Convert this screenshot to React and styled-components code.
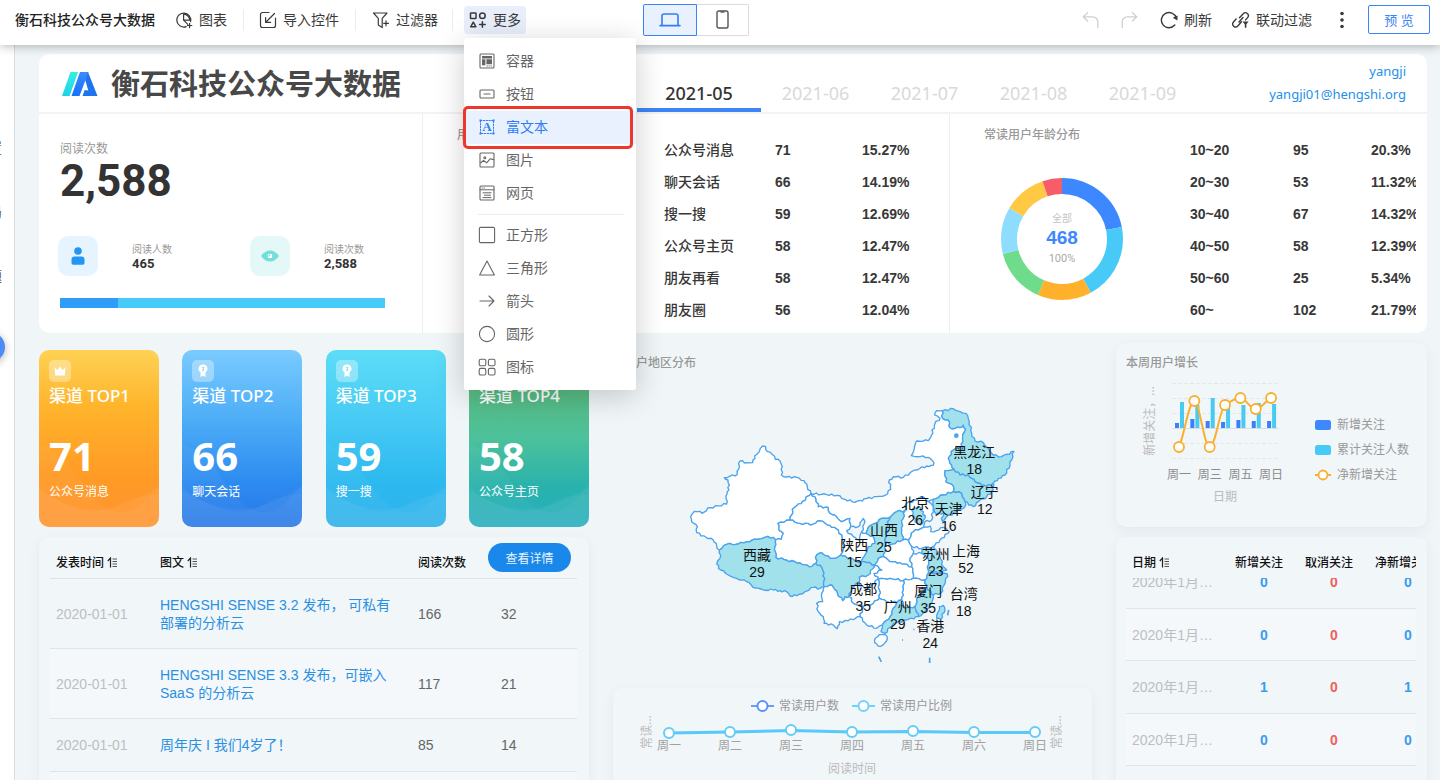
import React, { useLayoutEffect, useRef } from "react";
import styled, { createGlobalStyle } from "styled-components";

const UI = `"Noto Sans", "Noto Sans CJK SC", sans-serif`;
const DATA = `"Liberation Sans", "Noto Sans CJK SC", sans-serif`;
const NUM = `Roboto, "Noto Sans CJK SC", sans-serif`;

const Global = createGlobalStyle`
  *, *::before, *::after { box-sizing: border-box; }
  body { margin: 0; background: #f0f5f8; font-family: ${UI}; color: #333; font-size: 14px; }
  button { font-family: inherit; cursor: pointer; }
  svg { display: block; flex: none; }
`;

const Page = styled.div`
  height: 100vh;
  display: flex;
  flex-direction: column;
  overflow: hidden;
`;

/* ---------- toolbar ---------- */

const Toolbar = styled.header`
  position: relative;
  z-index: 5;
  flex: none;
  height: 45px;
  padding: 0 10px 6px 15px;
  display: flex;
  align-items: center;
  background: #fff;
  box-shadow: 0 1px 10px rgba(0, 0, 0, 0.3);
  white-space: nowrap;
`;
const DocTitle = styled.h1`
  margin: 0;
  width: 145px;
  font-size: 14px;
  line-height: 20px;
  font-weight: 500;
  color: #222;
`;
const Tool = styled.button`
  display: flex;
  align-items: center;
  gap: ${(p) => p.$gap || 6}px;
  height: 28px;
  padding: 0;
  margin-left: ${(p) => p.$left || 0}px;
  border: 0;
  border-radius: 4px;
  background: none;
  color: ${(p) => (p.$muted ? "#cfcfcf" : "#3a3a3a")};
  font-size: 14px;
  line-height: 20px;
`;
const ToolRule = styled.span`
  width: 1px;
  height: 22px;
  margin-left: ${(p) => p.$left}px;
  background: #ececec;
`;
const MoreWrap = styled.div`
  position: relative;
  margin-left: 11px;
`;
const MoreButton = styled(Tool)`
  width: 62px;
  padding-left: 5px;
  background: #e8effb;
`;
const Devices = styled.div`
  display: flex;
  height: 32px;
  margin-left: 117px;
`;
const Device = styled.button`
  display: flex;
  align-items: center;
  justify-content: center;
  width: ${(p) => (p.$on ? 54 : 52)}px;
  padding: 0;
  border: 1px solid ${(p) => (p.$on ? "#3b84f5" : "#dcdcdc")};
  border-left-width: ${(p) => (p.$on ? 1 : 0)}px;
  border-radius: ${(p) => (p.$on ? "2px 0 0 2px" : "0 2px 2px 0")};
  background: ${(p) => (p.$on ? "#e9f1fe" : "#fff")};
  color: ${(p) => (p.$on ? "#2f7df6" : "#555")};
`;
const RightTools = styled.div`
  display: flex;
  align-items: center;
  margin-left: auto;
`;
const Preview = styled.button`
  width: 62px;
  height: 29px;
  margin-left: 24px;
  padding: 0;
  border: 1px solid #3b84f5;
  border-radius: 2px;
  background: #fff;
  color: #3b84f5;
  font-size: 13px;
`;

/* ---------- drop-down menu ---------- */

const Menu = styled.div`
  position: absolute;
  z-index: 10;
  top: 32px;
  left: 0;
  width: 172px;
  padding: 7px 0 6px;
  background: #fff;
  border-radius: 2px;
  box-shadow: 0 6px 30px rgba(0, 0, 0, 0.2);
`;
const MenuItem = styled.button`
  display: flex;
  align-items: center;
  gap: 10px;
  width: 100%;
  height: 33px;
  padding: 0 14px;
  border: 0;
  background: ${(p) => (p.$on ? "#e9f1fe" : "none")};
  color: ${(p) => (p.$on ? "#2f7df6" : "#666")};
  font-size: 14px;
  line-height: 20px;
`;
const MenuRule = styled.hr`
  height: 1px;
  margin: 4px 12px 4px 14px;
  border: 0;
  background: #ededed;
`;
const Callout = styled.div`
  position: absolute;
  top: 68px;
  left: -1px;
  width: 170px;
  height: 43px;
  border: 3px solid #f0352b;
  border-radius: 5px;
  pointer-events: none;
`;

/* ---------- frame ---------- */

const Work = styled.div`
  flex: 1;
  min-height: 0;
  display: flex;
`;
const Side = styled.aside`
  position: relative;
  flex: none;
  width: 15px;
  padding: 93px 12px 0 0;
  display: flex;
  flex-direction: column;
  align-items: flex-end;
  gap: 44px;
  overflow: hidden;
  background: #fff;
  border-right: 1px solid #d8dde0;
  color: #555;
  font-size: 14px;
  line-height: 20px;
  white-space: nowrap;
`;
const SideKnob = styled.button`
  position: absolute;
  top: 287px;
  left: -25px;
  width: 30px;
  height: 30px;
  border: 0;
  border-radius: 50%;
  background: #4b8bfb;
  box-shadow: 0 2px 8px rgba(0, 0, 0, 0.3);
`;
const Board = styled.main`
  flex: 1;
  min-width: 0;
  padding: 9px 13px 0 24px;
  background: #f0f5f8;
`;

/* ---------- summary panel ---------- */

const Summary = styled.section`
  background: #fff;
  border-radius: 10px;
  overflow: hidden;
`;
const SummaryHead = styled.div`
  display: flex;
  height: 60px;
  padding: 0 21px 0 23px;
  border-bottom: 2px solid #f3f3f3;
`;
const Brand = styled.h2`
  display: flex;
  align-items: center;
  gap: 13px;
  margin: 0;
  padding-top: 2px;
  font-size: 29px;
  line-height: 40px;
  font-weight: 700;
  color: #484848;
  white-space: nowrap;
`;
const Months = styled.nav`
  display: flex;
  margin-left: auto;
`;
const Month = styled.button`
  width: ${(p) => (p.$on ? 124 : 109)}px;
  padding: 23px 0 0;
  border: 0;
  border-bottom: 4px solid ${(p) => (p.$on ? "#3d85f5" : "transparent")};
  background: none;
  color: ${(p) => (p.$on ? "#333" : "#d9d9d9")};
  font-size: 18px;
  line-height: 24px;
  font-weight: ${(p) => (p.$on ? 500 : 400)};
`;
const User = styled.div`
  display: flex;
  flex-direction: column;
  align-items: flex-end;
  width: 209px;
  padding-top: 6px;
  color: #2490e8;
  font-size: 13px;
  line-height: 23px;
`;
const Panes = styled.div`
  display: grid;
  grid-template-columns: 383fr 527fr 478fr;
`;
const Pane = styled.div`
  display: flex;
  min-width: 0;
  height: 219px;
  padding: 0 ${(p) => p.$right || 0}px 0 34px;
  border-left: 1px solid #eee;
`;
const ReadPane = styled.div`
  padding: 26px 0 0 21px;
`;
const Caption = styled.div`
  font-size: ${(p) => (p.$small ? 10 : 12)}px;
  line-height: ${(p) => (p.$small ? 14 : 18)}px;
  color: #999;
`;
const BigNumber = styled.div`
  font: 700 44px/46px ${NUM};
  color: #333;
`;
const Stats = styled.div`
  display: grid;
  grid-template-columns: 192px 1fr;
  margin: 32px 0 22px -2px;
`;
const Stat = styled.div`
  display: flex;
  gap: 34px;
`;
const StatIcon = styled.div`
  display: grid;
  place-items: center;
  width: 40px;
  height: 40px;
  border-radius: 10px;
  background: ${(p) => p.$bg};
`;
const StatText = styled.div`
  padding-top: 6px;
`;
const StatValue = styled.div`
  font: 700 13px/16px ${NUM};
  color: #333;
`;
const Progress = styled.div`
  width: 325px;
  height: 10px;
  background: #48caf9;
`;
const ProgressFill = styled.div`
  height: 100%;
  background: #2f9df8;
`;
const PaneTitle = styled.h3`
  margin: 0;
  font-size: 12px;
  line-height: 20px;
  font-weight: 500;
  color: #999;
`;
const PaneLeft = styled.div`
  flex: none;
  width: ${(p) => p.$w}px;
  padding-top: 11px;
`;
const DonutBox = styled.div`
  margin: 32px 0 0 16px;
`;
const Clip = styled.div`
  flex: 1;
  min-width: 0;
  padding-top: 20px;
  overflow: hidden;
`;
const Ranking = styled.table`
  width: 270px;
  table-layout: fixed;
  border-collapse: collapse;
  font: 700 14px/20px ${DATA};
  color: #383838;
  td, th { height: 32px; padding: 0; font-weight: 700; text-align: left; white-space: nowrap; }
  th { font-weight: ${(p) => (p.$boldNames ? 700 : 500)}; }
`;

/* ---------- lower grid ---------- */

const Lower = styled.div`
  display: grid;
  grid-template-columns: 550fr 479fr 311fr;
  gap: 24px;
  margin-top: 10px;
`;
const Column = styled.div`
  min-width: 0;
  display: flex;
  flex-direction: column;
  gap: 10px;
`;
const Panel = styled.section`
  position: relative;
  border-radius: 10px;
  background: #f1f6f9;
  box-shadow: 0 4px 12px rgba(60, 80, 100, 0.07);
`;
const Cards = styled.div`
  display: grid;
  grid-template-columns: repeat(4, 120px);
  justify-content: space-between;
  padding-top: 7px;
`;
const Card = styled.article`
  position: relative;
  height: 177px;
  padding: 10px 10px 0;
  overflow: hidden;
  border-radius: 10px;
  background: linear-gradient(${(p) => p.$bg});
  color: #fff;
`;
const Waves = styled.svg`
  position: absolute;
  left: 0;
  bottom: 0;
  width: 100%;
  height: 82px;
`;
const Badge = styled.div`
  display: grid;
  place-items: center;
  width: 22px;
  height: 22px;
  border-radius: 5px;
  background: rgba(255, 255, 255, 0.35);
`;
const CardTitle = styled.h3`
  margin: 2px 0 0;
  font-size: 17px;
  line-height: 24px;
  font-weight: 500;
  white-space: nowrap;
`;
const CardNumber = styled.div`
  position: relative;
  margin-top: 23px;
  font: 700 40px/50px ${UI};
`;
const CardLabel = styled.div`
  position: relative;
  margin-top: 2px;
  font-size: 12px;
  line-height: 18px;
`;

/* ---------- tables ---------- */

const Articles = styled(Panel)`
  height: 260px;
  padding: 10px 12px 0 11px;
`;
const DetailButton = styled.button`
  position: absolute;
  top: 6px;
  right: 18px;
  width: 83px;
  height: 29px;
  padding: 0;
  border: 0;
  border-radius: 15px;
  background: #1a88ea;
  color: #e8f4ff;
  font-size: 12px;
`;
const Grid = styled.table`
  width: ${(p) => p.$w || "100%"};
  table-layout: fixed;
  border-collapse: separate;
  border-spacing: 0;
  font: 400 14px/18px ${DATA};
  color: #666;
  th {
    height: 32px;
    padding: 0 0 0 6px;
    text-align: left;
    font: 500 12px/18px ${UI};
    color: #111;
    white-space: nowrap;
  }
  td { padding: 0 0 0 6px; border-bottom: 1px solid #dfe4e7; }
  tr:nth-child(even) td { background: #f5f8fb; }
`;
const ArticleHead = styled.thead`
  th { border-bottom: 1px solid #dfe4e7; }
`;
const ArticleRow = styled.tr`
  height: ${(p) => (p.$tall ? 70 : 53)}px;
`;
const TitleCell = styled.td`
  && { padding-right: 12px; }
`;
const Dim = styled.td`
  color: #bcbfc1;
`;
const Link = styled.a`
  color: #2a90e2;
  text-decoration: none;
`;
const Sort = styled.span`
  display: inline-block;
  vertical-align: -1px;
  margin-left: 3px;
`;
const Growth = styled(Panel)`
  height: 184px;
  padding: 10px 10px 0;
`;
const GrowthBody = styled.div`
  display: flex;
  gap: 22px;
  margin-top: 3px;
`;
const Legend = styled.ul`
  margin: 36px 0 0;
  padding: 0;
  list-style: none;
  font-size: 12px;
  line-height: 25px;
  color: #999;
  white-space: nowrap;
  li { display: flex; align-items: center; gap: 6px; }
`;
const DailyPanel = styled(Panel)`
  height: 260px;
  padding: 10px 11px 0 10px;
`;
const DailyScroll = styled.div`
  height: 250px;
  overflow: hidden;
`;
const DailyHead = styled.thead`
  th { position: sticky; top: 0; z-index: 1; height: 31px; background: #f1f6f9; }
`;
const DailyRow = styled.tr`
  height: ${(p) => (p.$tall ? 52 : 53)}px;
`;
const Value = styled.td`
  && { padding: 0; }
  text-align: center;
  font-weight: 700;
  color: ${(p) => (p.$red ? "#f0605f" : "#3c9bea")};
`;
const MapArea = styled.section`
  height: 335px;
  padding-top: 10px;
`;
const MapTitle = styled(PaneTitle)`
  margin-bottom: 9px;
  padding-left: 11px;
`;
const Trend = styled(Panel)`
  height: 120px;
  padding-top: 7px;
`;
const Wide = styled.svg`
  width: 100%;
`;

/* ---------- icons ---------- */

const Icon = ({ size = 18, children, w = 1.3 }) => (
  <svg width={size} height={size} viewBox="0 0 18 18" fill="none" stroke="currentColor" strokeWidth={w} strokeLinecap="round" strokeLinejoin="round" aria-hidden="true">
    {children}
  </svg>
);
const ChartIcon = () => (
  <Icon w={1.2}>
    <path d="M11.2 15.6A7 7 0 1 1 15.6 10.600" />
    <path d="M8.6 3.2v6h6.2A6.2 6.2 0 0 0 8.600 3.200zM8.600 9.200l4.200 4.200M14.600 12.300v4.400M12.400 14.500h4.400" />
  </Icon>
);
const ImportIcon = () => (
  <Icon w={1.2}>
    <path d="M10 1.500H3.500a2 2 0 0 0-2 2v11a2 2 0 0 0 2 2h11a2 2 0 0 0 2-2V7M15.500 2.500L7 11M6.600 6.600v4.800h5" />
  </Icon>
);
const FilterIcon = () => (
  <Icon w={1.2}>
    <path d="M1.500 2h13.500l-4.800 5.400v9.200M1.500 2l4.800 5.400v6.600l3.900 2.600M14 9.800v5M11.700 12.300h4.800" />
  </Icon>
);
const MoreIcon = () => (
  <Icon w={1.5}>
    <rect x="1.5" y="2" width="5.5" height="5.5" rx="0.6" />
    <circle cx="13.4" cy="4.8" r="2.8" />
    <path d="M4.3 11.2l-2.6 4.6h5.2zM13.4 10.7v5.6M10.6 13.5h5.6" />
  </Icon>
);
const LaptopIcon = () => (
  <svg width="22" height="14" viewBox="0 0 22 14" fill="none" stroke="currentColor" strokeWidth="1.6" aria-hidden="true">
    <path d="M3 12V3a2 2 0 0 1 2-2h12a2 2 0 0 1 2 2v9M1 12.6h20" strokeLinecap="round" />
  </svg>
);
const PhoneIcon = () => (
  <svg width="13" height="19" viewBox="0 0 13 19" fill="none" stroke="currentColor" strokeWidth="1.4" aria-hidden="true">
    <rect x="1" y="1" width="11" height="17" rx="1.8" />
    <path d="M4.5 2h4" />
  </svg>
);
const UndoIcon = ({ flip }) => (
  <svg width="17" height="18" viewBox="0 0 17 18" fill="none" stroke="currentColor" strokeWidth="1.3" strokeLinecap="round" aria-hidden="true">
    <g transform={flip ? "translate(17 0) scale(-1 1)" : undefined}>
      <path d="M5.600 1.600L1.300 5.800 5.600 10M1.600 5.800h9.200a5 5 0 0 1 5 5v5.600" />
    </g>
  </svg>
);
const RefreshIcon = () => (
  <Icon w={1.4}>
    <path d="M14.800 14A7.600 7.600 0 1 1 16.300 7" />
    <path d="M12.800 6.800l4.600 2.600.2-5z" fill="currentColor" stroke="none" />
  </Icon>
);
const LinkIcon = () => (
  <Icon w={1.4}>
    <path d="M7.5 6.8l3.7-4a2.9 2.9 0 0 1 4.4 3.800l-2 2.300M9.500 10.700L5.800 15A2.900 2.900 0 0 1 1.500 11l2.600-3M7 11l4-4.500" />
    <path d="M10.6 10.400h6l-2.200 2.800v3.600h-1.600v-3.600z" fill="currentColor" stroke="none" />
  </Icon>
);
const DotsIcon = () => (
  <svg width="4" height="18" viewBox="0 0 4 18" fill="currentColor" aria-hidden="true">
    <circle cx="2" cy="2.5" r="1.8" /><circle cx="2" cy="9" r="1.8" /><circle cx="2" cy="15.5" r="1.8" />
  </svg>
);

const menuIcons = {
  box: (
    <>
      <rect x="2" y="2" width="14" height="14" rx="1" />
      <path d="M4 4h10v2.400H4zM4 7.200h3.400v6H4zM8.400 7.200H14v5H8.400z" fill="currentColor" stroke="none" />
      <path d="M9 14h.4M11 14h.4M13 14h.4" strokeWidth="1" />
    </>
  ),
  button: <><rect x="2" y="5" width="14" height="8" rx="1" /><path d="M6 9h6" /></>,
  text: (
    <>
      <rect x="2.5" y="2.5" width="13" height="13" strokeDasharray="1.4 1.4" strokeWidth="1" />
      <path d="M1.5 1.5h2v2h-2zM14.5 1.5h2v2h-2zM1.5 14.5h2v2h-2zM14.5 14.5h2v2h-2z" fill="currentColor" stroke="none" />
      <text x="9" y="13.400" textAnchor="middle" fontSize="13" fontWeight="700" fontFamily="Liberation Serif, serif" fill="currentColor" stroke="none">A</text>
    </>
  ),
  image: (
    <>
      <rect x="2" y="2" width="14" height="14" rx="1" />
      <circle cx="6.8" cy="6.8" r="1" />
      <path d="M2.5 12l3-2.6 3.2 2.4 3.4-4 3.6.8" />
    </>
  ),
  page: <><rect x="2" y="2" width="14" height="14" rx="1" /><path d="M2 5.800h14M4 4h.4M6 4h.4M5 8.800h8M6.500 11.200h6M5 13.600h8" strokeWidth="1" /></>,
  square: <rect x="1.4" y="1.4" width="15.2" height="15.2" rx="1.2" />,
  triangle: <path d="M9 2L1.6 16h14.8z" />,
  arrow: <path d="M2 9h14M11 4l5 5-5 5" />,
  circle: <circle cx="9" cy="9" r="7.6" />,
  grid: (
    <>
      <rect x="1.2" y="1.2" width="6.600" height="6.600" rx="1.600" /><rect x="10.400" y="1.2" width="6.600" height="6.600" rx="1.600" />
      <rect x="1.2" y="10.400" width="6.600" height="6.600" rx="1.600" /><rect x="10.400" y="10.400" width="6.600" height="6.600" rx="1.600" />
    </>
  ),
};
const SortIcon = () => (
  <Sort>
    <svg width="11" height="11" viewBox="0 0 11 11" fill="none" stroke="#222" aria-hidden="true">
      <path d="M3.5 10.5V1L.8 4" strokeWidth="1.2" />
      <path d="M5.5 2H10M5.5 4.5H10M5.5 7H10M5.5 9.5H10" stroke="#555" />
    </svg>
  </Sort>
);
const Logo = () => (
  <svg width="36" height="24" viewBox="0 0 36 24" aria-hidden="true">
    <defs>
      <linearGradient id="lg1" x1="0" y1="0" x2="0" y2="1"><stop offset="0" stopColor="#38eee0" /><stop offset="1" stopColor="#19d3e8" /></linearGradient>
      <linearGradient id="lg2" x1="0" y1="0" x2="0" y2="1"><stop offset="0" stopColor="#3b8bfb" /><stop offset="1" stopColor="#1572fb" /></linearGradient>
    </defs>
    <path d="M8.500 0H16L7.600 24H0z" fill="url(#lg1)" />
    <path d="M18 0h8.500l-9 24H9.500z" fill="url(#lg2)" />
    <path d="M26 0l9.500 24H20.500l2.200-6 3.600.6L23.200 8z" fill="#1d74ee" />
  </svg>
);

/* ---------- charts ---------- */

const slices = [
  [102, "#3d87ff"], [95, "#48caf9"], [67, "#ffb12b"], [68, "#6edc8b"],
  [58, "#8edcfe"], [53, "#ffc945"], [25, "#f75c6a"],
];
const Donut = () => {
  const c = 2 * Math.PI * 53;
  let sum = 0;
  return (
    <svg width="124" height="124" viewBox="0 0 124 124" role="img" aria-label="常读用户年龄分布">
      <g transform="rotate(-90 62 62)" fill="none" strokeWidth="16">
        {slices.map(([n, color]) => {
          const from = (sum / 468) * c;
          sum += n;
          return <circle key={color} cx="62" cy="62" r="53" stroke={color} strokeDasharray={`${(n / 468) * c} ${c}`} strokeDashoffset={-from} />;
        })}
      </g>
      <g textAnchor="middle">
        <text x="62" y="45" fontSize="10" fill="#c4c4c4">全部</text>
        <text x="62" y="67" fontSize="19" fontWeight="700" fill="#3d87ff" fontFamily="Liberation Sans, sans-serif">468</text>
        <text x="62" y="85" fontSize="11" fill="#aaa" fontFamily="Roboto, sans-serif">100%</text>
      </g>
    </svg>
  );
};

const blueTops = [47, 43, 45, 46, 44, 45, 45];
const cyanTops = [26, 29, 22, 32, 29, 27, 28];
const growthLine = [71, 25, 71, 29, 22, 33, 22];
const GrowthChart = () => (
  <svg width="167" height="136" viewBox="0 0 167 136" fontSize="12" role="img" aria-label="本周用户增长">
    {[7, 22, 37, 67, 82].map((y) => <path key={y} d={`M46 ${y + 0.5}h107`} stroke="#e3e7ea" strokeDasharray="4 2" />)}
    <path d="M46 52.500h107" stroke="#d9dee2" />
    {blueTops.map((y, i) => <rect key={i} x={49 + i * 15.35} y={y} width="4" height={52 - y} fill="#3d7ff5" />)}
    {cyanTops.map((y, i) => <rect key={i} x={54 + i * 15.35} y={y} width="4" height={52 - y} fill="#48caf2" />)}
    <path d="M53 71C58 60 63 25 68.300 25S78 71 83.700 71 94 32 99 29 109 22 114.300 22 124 33 129.700 33 140 24 145.300 22" fill="none" stroke="#f9b02f" strokeWidth="2" />
    {growthLine.map((y, i) => <circle key={i} cx={53 + i * 15.35} cy={y} r="5" fill="#fff" stroke="#f9b02f" strokeWidth="1.8" />)}
    <g textAnchor="middle" fill="#8c8c8c">
      {["周一", "周三", "周五", "周日"].map((d, i) => <text key={d} x={53 + i * 30.7} y="103">{d}</text>)}
      <text x="99" y="125" fill="#bbb">日期</text>
      <text transform="translate(28 45) rotate(-90)" fill="#bbb">新增关注，…</text>
    </g>
  </svg>
);

const trendY = [48, 47, 45, 47, 46, 47, 47];
const trendLine = [38, 37, 35.5, 37, 36.5, 37.5, 37.5];
const TrendChart = () => (
  <Wide viewBox="0 0 479 90" fontSize="12" role="img" aria-label="阅读时间">
    <path d="M138 11h23" stroke="#6b9cfa" strokeWidth="2" /><circle cx="149.500" cy="11" r="5" fill="#fff" stroke="#5b8ff9" strokeWidth="2" />
    <path d="M239 11h23" stroke="#6ed3f8" strokeWidth="2" /><circle cx="250.500" cy="11" r="5" fill="#fff" stroke="#6ed3f8" strokeWidth="2" />
    <text x="166" y="15" fill="#999">常读用户数</text>
    <text x="267" y="15" fill="#999">常读用户比例</text>
    <path d={`M${trendLine.map((y, i) => `${56 + i * 61} ${y}`).join("L")}`} fill="none" stroke="#5ac8f8" strokeWidth="3" />
    {trendY.map((y, i) => <circle key={i} cx={56 + i * 61} cy={y - 10} r="5" fill="#fff" stroke="#63cdf5" strokeWidth="2" />)}
    <g textAnchor="middle" fill="#a0a0a0">
      {["周一", "周二", "周三", "周四", "周五", "周六", "周日"].map((d, i) => <text key={d} x={56 + i * 61} y="55">{d}</text>)}
      <text x="239" y="78" fill="#bbb">阅读时间</text>
      <text transform="translate(38 37) rotate(-90)" fill="#bbb">常读…</text>
      <text transform="translate(448 37) rotate(-90)" fill="#bbb">常读…</text>
    </g>
  </Wide>
);

/* province outlines: [filled, "x y x y ..."] */
const provinces = [
  [0, "488 318 497 320 502 335 516 343 526 358 540 363 547 380 544 405 560 411 590 412 612 422 622 440 633 461 608 484 590 497 577 508 576 524 570 540 552 547 534 550 538 572 550 580 544 598 527 600 520 592 495 592 470 598 440 605 415 612 380 613 358 630 350 618 340 600 318 592 290 578 292 560 275 545 272 530 283 514 300 514 306 520 330 503 380 492 378 468 387 450 384 420 373 413 412 403 420 363 440 368 458 368 464 348 478 335"],
  [1, "358 630 380 613 415 612 440 605 470 598 495 592 520 592 527 600 525 620 528 652 560 660 600 668 628 680 648 670 665 682 672 700 672 740 660 745 640 742 615 755 590 767 570 768 560 755 540 752 520 750 490 750 466 744 440 725 410 715 385 705 362 690 350 672 360 655"],
  [0, "534 550 552 547 570 540 600 550 640 552 660 542 690 556 715 570 727 595 733 620 722 645 705 655 690 655 665 638 650 645 648 670 628 680 600 668 560 660 528 652 525 620 527 600 544 598 550 580 538 572"],
  [0, "633 461 648 478 655 500 685 502 690 520 710 530 725 545 750 535 752 560 740 572 760 590 778 600 785 575 798 580 820 590 825 610 805 620 795 645 785 665 770 665 750 655 735 648 722 645 733 620 727 595 715 570 690 556 660 542 640 552 600 550 570 540 576 524 577 508 590 497 608 484"],
  [0, "633 461 680 464 710 466 735 478 765 487 800 476 830 470 855 466 872 448 868 420 880 410 910 412 945 390 980 378 1000 376 1002 368 985 352 960 350 934 347 943 325 950 303 985 302 995 285 1005 250 1020 235 1004 225 1010 212 1028 212 1028 235 1045 240 1052 265 1080 263 1090 255 1097 268 1088 290 1086 320 1060 330 1045 355 1055 375 1062 388 1035 392 1038 425 1060 438 1060 455 1030 465 1000 478 985 485 965 470 950 480 920 490 915 512 890 515 870 532 845 535 825 550 805 562 798 580 785 575 795 545 790 535 780 548 775 560 752 560 750 535 725 545 710 530 690 520 685 502 655 500 648 478"],
  [1, "1028 212 1060 206 1080 215 1098 220 1108 245 1115 280 1125 303 1150 308 1165 325 1180 345 1205 350 1242 334 1230 375 1215 405 1195 415 1180 430 1160 440 1140 430 1125 425 1105 405 1080 405 1062 388 1055 375 1045 355 1060 330 1086 320 1088 290 1097 268 1090 255 1080 263 1052 265 1045 240 1028 235"],
  [1, "1035 392 1062 388 1080 405 1105 405 1125 425 1140 430 1160 440 1180 430 1180 450 1160 470 1135 485 1120 500 1095 485 1085 460 1060 455 1060 438 1038 425"],
  [1, "1000 478 1030 465 1060 455 1085 460 1095 485 1095 500 1070 515 1040 530 1028 545 1024 535 1032 518 1008 522 1000 500"],
  [0, "920 490 950 480 965 470 985 485 1000 500 995 540 975 545 970 562 940 575 925 600 908 600 905 570 905 550 915 512"],
  [1, "935 510 955 500 970 515 975 535 962 555 945 545"],
  [0, "925 600 940 575 970 562 990 558 992 575 1010 572 1030 562 1048 575 1020 600 1000 620 965 625 935 620"],
  [1, "870 532 890 515 915 512 905 550 905 570 908 600 870 615 855 605 860 570 862 545"],
  [1, "845 535 870 532 862 545 860 570 855 605 858 630 850 650 835 655 825 675 800 668 785 665 795 645 805 620 825 610 820 590 798 580 805 562 825 550"],
  [0, "870 615 908 600 925 600 935 620 940 640 930 655 935 680 900 668 870 665 850 650 858 630 855 605"],
  [0, "850 650 870 665 900 668 935 680 940 700 940 715 910 722 870 715 835 718 822 700 845 690 835 680 825 675 835 655"],
  [1, "650 645 665 638 690 655 705 655 722 645 735 648 750 655 770 665 785 665 800 668 825 675 822 690 805 705 778 712 775 730 755 745 748 770 735 770 728 782 712 760 700 742 690 735 672 740 672 700 665 682 648 670"],
  [0, "825 675 835 680 845 690 822 700 835 718 815 735 800 750 775 730 778 712 805 705"],
  [0, "940 640 965 640 985 655 985 690 985 700 975 720 940 715 940 700 935 680 930 655"],
  [1, "965 625 1000 620 1020 650 1030 680 1040 690 1015 700 985 690 985 655 965 640"],
  [1, "985 700 1015 700 1042 702 1035 730 1022 760 1000 765 980 745 975 720"],
  [0, "910 722 940 715 975 720 980 745 955 770 945 800 915 805 905 780 910 750"],
  [1, "980 745 1000 765 995 790 975 815 955 830 945 800 955 770"],
  [0, "835 718 870 715 910 722 910 750 905 780 890 788 860 785 838 775 838 750"],
  [0, "755 745 775 730 800 750 815 735 835 718 838 750 838 775 820 790 790 800 760 790 748 770"],
  [0, "790 800 820 790 838 775 860 785 890 788 880 805 870 830 847 855 830 865 800 855 780 830"],
  [1, "880 805 890 788 905 780 915 805 945 800 955 830 920 840 880 850 855 880 843 875 847 855 870 830"],
  [0, "672 740 690 735 700 742 712 760 728 782 735 770 748 770 760 790 790 800 780 830 745 842 718 845 712 866 700 855 672 850 670 830 655 815 650 790 668 785 665 760"],
  [0, "826 895 838 884 856 884 862 896 850 914 834 918 824 908"],
  [1, "1010 835 1018 800 1030 796 1035 810 1022 838"],
];

/* splits each edge into short wavering steps; the same edge always gives the same steps */
const outline = (text) => {
  const n = text.split(" ").map(Number);
  const pts = [];
  for (let i = 0; i < n.length; i += 2) pts.push([n[i], n[i + 1]]);
  const out = [];
  pts.forEach((a, i) => {
    const b = pts[(i + 1) % pts.length];
    const flip = a[0] > b[0] || (a[0] === b[0] && a[1] > b[1]);
    const [p, q] = flip ? [b, a] : [a, b];
    const len = Math.hypot(q[0] - p[0], q[1] - p[1]);
    const steps = Math.max(1, Math.round(len / 8));
    const mid = [];
    for (let k = 1; k < steps; k += 1) {
      const off = Math.sin(p[0] * 3.1 + p[1] * 1.7 + k * 2.3) * 3;
      mid.push([
        p[0] + ((q[0] - p[0]) * k) / steps - ((q[1] - p[1]) / len) * off,
        p[1] + ((q[1] - p[1]) * k) / steps + ((q[0] - p[0]) / len) * off,
      ]);
    }
    if (flip) mid.reverse();
    out.push(a, ...mid);
  });
  return `M${out.map(([x, y]) => `${x.toFixed(1)} ${y.toFixed(1)}`).join("L")}Z`;
};

const places = [
  ["黑龙江", 18, 1123, 335], ["辽宁", 12, 1154, 457], ["北京", 26, 946, 489], ["天津", 16, 1046, 507],
  ["山西", 25, 852, 571], ["陕西", 15, 763, 616], ["苏州", 23, 1007, 641], ["上海", 52, 1098, 633],
  ["西藏", 29, 471, 644], ["成都", 35, 790, 746], ["广州", 29, 893, 800], ["厦门", 35, 985, 752],
  ["台湾", 18, 1091, 763], ["香港", 24, 991, 857],
];
const ChinaMap = () => (
  <Wide viewBox="39 126 1437 880" role="img" aria-label="用户地区分布">
    <g stroke="#4aa3ee" strokeWidth="4" strokeLinejoin="round">
      {provinces.map(([on, text], i) => <path key={i} d={outline(text)} fill={on ? "#a0e1eb" : "#fff"} />)}
      <circle cx="1069" cy="287" r="5" fill="#4aa3ee" />
      <path d="M836 950l8 16M989 953v16M1046 810l-3 16M906 900h3M940 868h3M990 920h3" strokeWidth="5" />
    </g>
    <g fontSize="42" fill="#111" textAnchor="middle" fontFamily='"Liberation Sans", "Noto Sans CJK SC", sans-serif'>
      {places.map(([name, n, x, y]) => (
        <g key={name}>
          <text x={x} y={y + 15}>{name}</text>
          <text x={x} y={y + 66}>{n}</text>
        </g>
      ))}
    </g>
  </Wide>
);

/* ---------- data ---------- */

const menuTop = [["容器", "box"], ["按钮", "button"], ["富文本", "text"], ["图片", "image"], ["网页", "page"]];
const menuBottom = [["正方形", "square"], ["三角形", "triangle"], ["箭头", "arrow"], ["圆形", "circle"], ["图标", "grid"]];
const months = ["2021-05", "2021-06", "2021-07", "2021-08", "2021-09"];
const channels = [
  ["公众号消息", 71, "15.27%"], ["聊天会话", 66, "14.19%"], ["搜一搜", 59, "12.69%"],
  ["公众号主页", 58, "12.47%"], ["朋友再看", 58, "12.47%"], ["朋友圈", 56, "12.04%"],
];
const ages = [
  ["10~20", 95, "20.3%"], ["20~30", 53, "11.32%"], ["30~40", 67, "14.32%"],
  ["40~50", 58, "12.39%"], ["50~60", 25, "5.34%"], ["60~", 102, "21.79%"],
];
const cards = [
  ["渠道 TOP1", 71, "公众号消息", "#fed254, #ffb42b 32%, #ff9a26 72%, #ff9430"],
  ["渠道 TOP2", 66, "聊天会话", "#7acbff, #4eaef6 38%, #2d8bf0 75%, #2878e8"],
  ["渠道 TOP3", 59, "搜一搜", "#5cddf7, #46c9f4 42%, #2cb9ef 75%, #2eb2ec"],
  ["渠道 TOP4", 58, "公众号主页", "#63c070, #58bd85 25%, #4cc19b 50%, #28b2ad 78%, #28aec0"],
];
const articles = [
  ["2020-01-01", "HENGSHI SENSE 3.2 发布， 可私有部署的分析云", 166, 32, true],
  ["2020-01-01", "HENGSHI SENSE 3.3 发布，可嵌入SaaS 的分析云", 117, 21, true],
  ["2020-01-01", "周年庆 I 我们4岁了！", 85, 14, false],
  ["2020-01-01", "HENGSHI SENSE 3.4 发布", 80, 12, false],
];
const days = [[0, 0, 0], [0, 0, 0], [1, 0, 1], [0, 0, 0], [0, 0, 0]];

const RankTable = ({ rows, widths, boldNames }) => (
  <Ranking $boldNames={boldNames}>
    <colgroup>{widths.map((w, i) => <col key={i} width={w} />)}</colgroup>
    <tbody>
      {rows.map(([name, n, share]) => (
        <tr key={name}><th scope="row">{name}</th><td>{n}</td><td>{share}</td></tr>
      ))}
    </tbody>
  </Ranking>
);

const DailyTable = () => {
  const box = useRef(null);
  useLayoutEffect(() => { box.current.scrollTop = 22; }, []);
  return (
    <DailyScroll ref={box}>
      <Grid $w="321px">
        <colgroup><col width="103" /><col width="70" /><col width="70" /><col width="78" /></colgroup>
        <DailyHead><tr><th>日期<SortIcon /></th><th>新增关注</th><th>取消关注</th><th>净新增关注</th></tr></DailyHead>
        <tbody>
          {days.map(([a, b, c], i) => (
            <DailyRow key={i} $tall={i % 2 === 1}>
              <Dim>2020年1月…</Dim><Value>{a}</Value><Value $red>{b}</Value><Value>{c}</Value>
            </DailyRow>
          ))}
        </tbody>
      </Grid>
    </DailyScroll>
  );
};

export default function App() {
  return (
    <Page>
      <Global />
      <Toolbar>
        <DocTitle>衡石科技公众号大数据</DocTitle>
        <Tool $left={15}><ChartIcon />图表</Tool>
        <ToolRule $left={16} />
        <Tool $left={15}><ImportIcon />导入控件</Tool>
        <ToolRule $left={16} />
        <Tool $left={16}><FilterIcon />过滤器</Tool>
        <ToolRule $left={14} />
        <MoreWrap>
          <MoreButton aria-expanded="true"><MoreIcon />更多</MoreButton>
          <Menu>
            {menuTop.map(([name, icon]) => (
              <MenuItem key={name} $on={icon === "text"}><Icon w={1.1}>{menuIcons[icon]}</Icon>{name}</MenuItem>
            ))}
            <MenuRule />
            {menuBottom.map(([name, icon]) => (
              <MenuItem key={name}><Icon w={1.1}>{menuIcons[icon]}</Icon>{name}</MenuItem>
            ))}
            <Callout />
          </Menu>
        </MoreWrap>
        <Devices>
          <Device $on aria-label="电脑"><LaptopIcon /></Device>
          <Device aria-label="手机"><PhoneIcon /></Device>
        </Devices>
        <RightTools>
          <Tool $muted aria-label="撤销"><UndoIcon /></Tool>
          <Tool $muted $left={22} aria-label="重做"><UndoIcon flip /></Tool>
          <Tool $left={22}><RefreshIcon />刷新</Tool>
          <Tool $left={20}><LinkIcon />联动过滤</Tool>
          <Tool $left={28} aria-label="更多操作"><DotsIcon /></Tool>
          <Preview>预 览</Preview>
        </RightTools>
      </Toolbar>

      <Work>
        <Side>
          <span>设置</span><span>布局</span><span>主题</span>
          <SideKnob aria-label="展开" />
        </Side>
        <Board>
          <Summary>
            <SummaryHead>
              <Brand><Logo />衡石科技公众号大数据</Brand>
              <Months>{months.map((m, i) => <Month key={m} $on={i === 0}>{m}</Month>)}</Months>
              <User><span>yangji</span><span>yangji01@hengshi.org</span></User>
            </SummaryHead>
            <Panes>
              <ReadPane>
                <Caption>阅读次数</Caption>
                <BigNumber>2,588</BigNumber>
                <Stats>
                  <Stat>
                    <StatIcon $bg="#e6f4ff">
                      <svg width="14" height="18" viewBox="0 0 14 18" fill="#2196f3" aria-hidden="true"><circle cx="7" cy="4" r="3.800" /><path d="M.5 12.500Q.5 9.500 3.500 9.500h7q3 0 3 3V16q0 1.700-1.700 1.700H2.200Q.5 17.700.5 16z" /></svg>
                    </StatIcon>
                    <StatText><Caption $small>阅读人数</Caption><StatValue>465</StatValue></StatText>
                  </Stat>
                  <Stat>
                    <StatIcon $bg="#e3f8f7">
                      <svg width="18" height="12" viewBox="0 0 18 12" aria-hidden="true"><path d="M0 6Q4 .5 9 .5T18 6Q14 11.500 9 11.500T0 6z" fill="#73dedb" /><circle cx="9" cy="6" r="2.300" fill="#fff" /><circle cx="8.500" cy="5.500" r=".9" fill="#73dedb" /></svg>
                    </StatIcon>
                    <StatText><Caption $small>阅读次数</Caption><StatValue>2,588</StatValue></StatText>
                  </Stat>
                </Stats>
                <Progress><ProgressFill style={{ width: `${(465 / 2588) * 100}%` }} /></Progress>
              </ReadPane>
              <Pane>
                <PaneLeft $w={207}><PaneTitle>用户渠道分布</PaneTitle></PaneLeft>
                <Clip><RankTable rows={channels} widths={[111, 87, 72]} /></Clip>
              </Pane>
              <Pane $right={11}>
                <PaneLeft $w={206}>
                  <PaneTitle>常读用户年龄分布</PaneTitle>
                  <DonutBox><Donut /></DonutBox>
                </PaneLeft>
                <Clip><RankTable rows={ages} widths={[103, 78, 89]} boldNames /></Clip>
              </Pane>
            </Panes>
          </Summary>

          <Lower>
            <Column>
              <Cards>
                {cards.map(([title, n, label, bg], i) => (
                  <Card key={title} $bg={bg}>
                    <Waves viewBox="0 0 120 82" preserveAspectRatio="none" fill="#fff" aria-hidden="true">
                      <path d="M0 0C40 8 45 66 82 67 100 68 108 50 120 41V82H0z" opacity=".04" />
                      <path d="M0 45C45 72 75 70 120 41V82H0z" opacity=".04" />
                      <path d="M0 42C30 66 60 74 84 58 98 50 108 50 120 49V82H0z" opacity=".04" />
                    </Waves>
                    <Badge>
                      {i === 0 ? (
                        <svg width="12" height="10" viewBox="0 0 12 10" fill="#fff" aria-hidden="true"><path d="M.5 1.500L3.500 4 6 .5 8.500 4l3-2.500L10.800 9.500H1.200z" /></svg>
                      ) : (
                        <svg width="10" height="14" viewBox="0 0 10 14" fill="#fff" aria-hidden="true"><path fillRule="evenodd" d="M5 .5a4.300 4.300 0 0 1 2.500 7.900V13L5 11.700 2.500 13V8.400A4.300 4.300 0 0 1 5 .5zM4 3v1h1.200L4 6v.8h2.400V6L5.600 6 6.400 4V3z" /></svg>
                      )}
                    </Badge>
                    <CardTitle>{title}</CardTitle>
                    <CardNumber>{n}</CardNumber>
                    <CardLabel>{label}</CardLabel>
                  </Card>
                ))}
              </Cards>
              <Articles>
                <Grid>
                  <colgroup><col width="104" /><col width="258" /><col width="83" /><col /></colgroup>
                  <ArticleHead><tr><th>发表时间<SortIcon /></th><th>图文<SortIcon /></th><th>阅读次数</th><th aria-label="分享次数" /></tr></ArticleHead>
                  <tbody>
                    {articles.map(([date, title, reads, shares, tall], i) => (
                      <ArticleRow key={i} $tall={tall}>
                        <Dim>{date}</Dim><TitleCell><Link href="#article">{title}</Link></TitleCell><td>{reads}</td><td>{shares}</td>
                      </ArticleRow>
                    ))}
                  </tbody>
                </Grid>
                <DetailButton>查看详情</DetailButton>
              </Articles>
            </Column>

            <Column>
              <MapArea>
                <MapTitle>用户地区分布</MapTitle>
                <ChinaMap />
              </MapArea>
              <Trend><TrendChart /></Trend>
            </Column>

            <Column>
              <Growth>
                <PaneTitle>本周用户增长</PaneTitle>
                <GrowthBody>
                  <GrowthChart />
                  <Legend>
                    <li><svg width="16" height="10" aria-hidden="true"><rect width="16" height="10" rx="2.500" fill="#3d87ff" /></svg>新增关注</li>
                    <li><svg width="16" height="10" aria-hidden="true"><rect width="16" height="10" rx="2.500" fill="#48caf9" /></svg>累计关注人数</li>
                    <li><svg width="16" height="12" aria-hidden="true"><path d="M0 6h16" stroke="#f9b02f" strokeWidth="2" /><circle cx="8" cy="6" r="4.500" fill="#fff" stroke="#f9b02f" strokeWidth="1.800" /></svg>净新增关注</li>
                  </Legend>
                </GrowthBody>
              </Growth>
              <DailyPanel><DailyTable /></DailyPanel>
            </Column>
          </Lower>
        </Board>
      </Work>
    </Page>
  );
}
